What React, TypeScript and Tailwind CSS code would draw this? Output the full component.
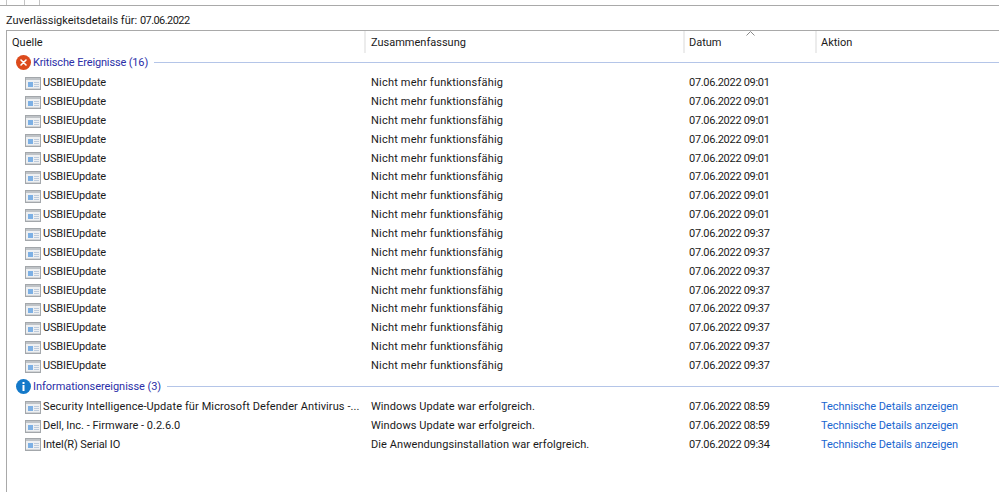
const critical = [
  "09:01", "09:01", "09:01", "09:01", "09:01", "09:01", "09:01", "09:01",
  "09:37", "09:37", "09:37", "09:37", "09:37", "09:37", "09:37", "09:37",
];

const info = [
  { source: "Security Intelligence-Update für Microsoft Defender Antivirus -...", summary: "Windows Update war erfolgreich.", time: "08:59", sourceClass: "tracking-[0.1px]" },
  { source: "Dell, Inc. - Firmware - 0.2.6.0", summary: "Windows Update war erfolgreich.", time: "08:59", sourceClass: "tracking-[0px]" },
  { source: "Intel(R) Serial IO", summary: "Die Anwendungsinstallation war erfolgreich.", time: "09:34", sourceClass: "tracking-[-0.1px]" },
];

function AppIcon() {
  return (
    <svg width="16" height="13" viewBox="0 0 16 13" className="shrink-0">
      <rect x="0.5" y="0.5" width="15" height="12" fill="#eef0f2" stroke="#a3a7ab" />
      <rect x="1" y="1" width="14" height="2" fill="#bfc3c7" />
      <rect x="3" y="5" width="5" height="5" fill="#7db0e4" />
      <rect x="9" y="5" width="5" height="1" fill="#bccadb" />
      <rect x="9" y="7" width="5" height="1" fill="#bccadb" />
      <rect x="9" y="9" width="5" height="1" fill="#bccadb" />
      <rect x="1" y="11" width="14" height="1" fill="#d2d5d8" />
    </svg>
  );
}

function CriticalIcon() {
  return (
    <svg width="15" height="15" viewBox="0 0 15 15" className="shrink-0">
      <circle cx="7.5" cy="7.5" r="7.5" fill="#dc4a1c" />
      <path d="M5 5l5 5M10 5l-5 5" stroke="#fff" strokeWidth="1.6" strokeLinecap="round" />
    </svg>
  );
}

function InfoIcon() {
  return (
    <svg width="15" height="15" viewBox="0 0 15 15" className="shrink-0">
      <circle cx="7.5" cy="7.5" r="7.5" fill="#1479c9" />
      <rect x="6.5" y="6" width="2" height="6" fill="#fff" />
      <rect x="6.5" y="3" width="2" height="2" fill="#fff" />
    </svg>
  );
}

function Row({ source, sourceClass, summary, summaryClass, date, link }: { source: string; sourceClass: string; summary: string; summaryClass: string; date: string; link?: boolean }) {
  return (
    <div className="grid h-[18.87px] grid-cols-[358px_318px_132px_1fr] items-center">
      <div className="flex min-w-0 items-center gap-[2px] pl-[18px]">
        <AppIcon />
        <span className={`whitespace-nowrap ${sourceClass}`}>{source}</span>
      </div>
      <span className={`pl-[6px] whitespace-nowrap ${summaryClass}`}>{summary}</span>
      <span className="pl-[6px] whitespace-nowrap tracking-[-0.3px]">{date}</span>
      {link && <span className="pl-[6px] whitespace-nowrap tracking-[-0.07px] text-[#1a66d0]">Technische Details anzeigen</span>}
    </div>
  );
}

function Group({ icon, title, titleClass }: { icon: React.ReactNode; title: string; titleClass: string }) {
  return (
    <div className="flex h-[19px] items-center gap-[2px] pl-[9px]">
      {icon}
      <span className={`whitespace-nowrap pt-[1px] text-[#2b2fa8] ${titleClass}`}>{title}</span>
      <div className="ml-[4px] h-px flex-1 bg-[#b4c5e8]" />
    </div>
  );
}

function HeaderCell({ label, className }: { label: string; className: string }) {
  return <div className={`flex h-[22px] items-center border-l-2 border-[#ececec] pt-[2px] ${className}`}>{label}</div>;
}

export default function App() {
  return (
    <div className="flex h-[492px] w-[999px] flex-col overflow-hidden bg-white font-['Roboto',sans-serif] text-[11px] text-[#1a1a1a]">
      <div className="flex h-[6px] shrink-0 border-b border-[#a9a9a9] pl-[6px]">
        <div className="w-[18px] border-l border-[#c4c4c4]" />
        <div className="w-[15px] border-l border-[#c4c4c4]" />
        <div className="border-l border-[#c4c4c4]" />
      </div>
      <div className="flex h-[24px] shrink-0 items-center pl-[6px] pt-[6px] whitespace-pre">
        Zuverlässigkeitsdetails für: <span className="tracking-[-0.55px]">07.06.2022</span>
      </div>
      <div className="ml-[6px] flex-1 border-t border-l border-[#a9a9a9]">
        <div className="relative grid h-[22px] grid-cols-[357px_319px_132px_1fr]">
          <div className="flex items-center pt-[2px] pl-[5px]">Quelle</div>
          <HeaderCell label="Zusammenfassung" className="pl-[5px]" />
          <HeaderCell label="Datum" className="pl-[4px]" />
          <HeaderCell label="Aktion" className="pl-[4px]" />
          <svg width="9" height="5" viewBox="0 0 9 5" className="absolute left-[739px] top-0">
            <path d="M0.5 4.5L4.5 0.5L8.5 4.5" fill="none" stroke="#8a8a8a" />
          </svg>
        </div>
        <Group icon={<CriticalIcon />} title="Kritische Ereignisse (16)" titleClass="tracking-[-0.15px]" />
        <div className="h-[2px]" />
        {critical.map((time, i) => (
          <Row key={i} source="USBIEUpdate" sourceClass="tracking-[-0.15px]" summary="Nicht mehr funktionsfähig" summaryClass="tracking-[0.2px]" date={`07.06.2022 ${time}`} />
        ))}
        <div className="h-[1px]" />
        <Group icon={<InfoIcon />} title="Informationsereignisse (3)" titleClass="tracking-[-0.05px]" />
        <div className="h-[2px]" />
        {info.map((item) => (
          <Row key={item.source} source={item.source} sourceClass={item.sourceClass} summary={item.summary} summaryClass="tracking-[0.08px]" date={`07.06.2022 ${item.time}`} link />
        ))}
      </div>
    </div>
  );
}
